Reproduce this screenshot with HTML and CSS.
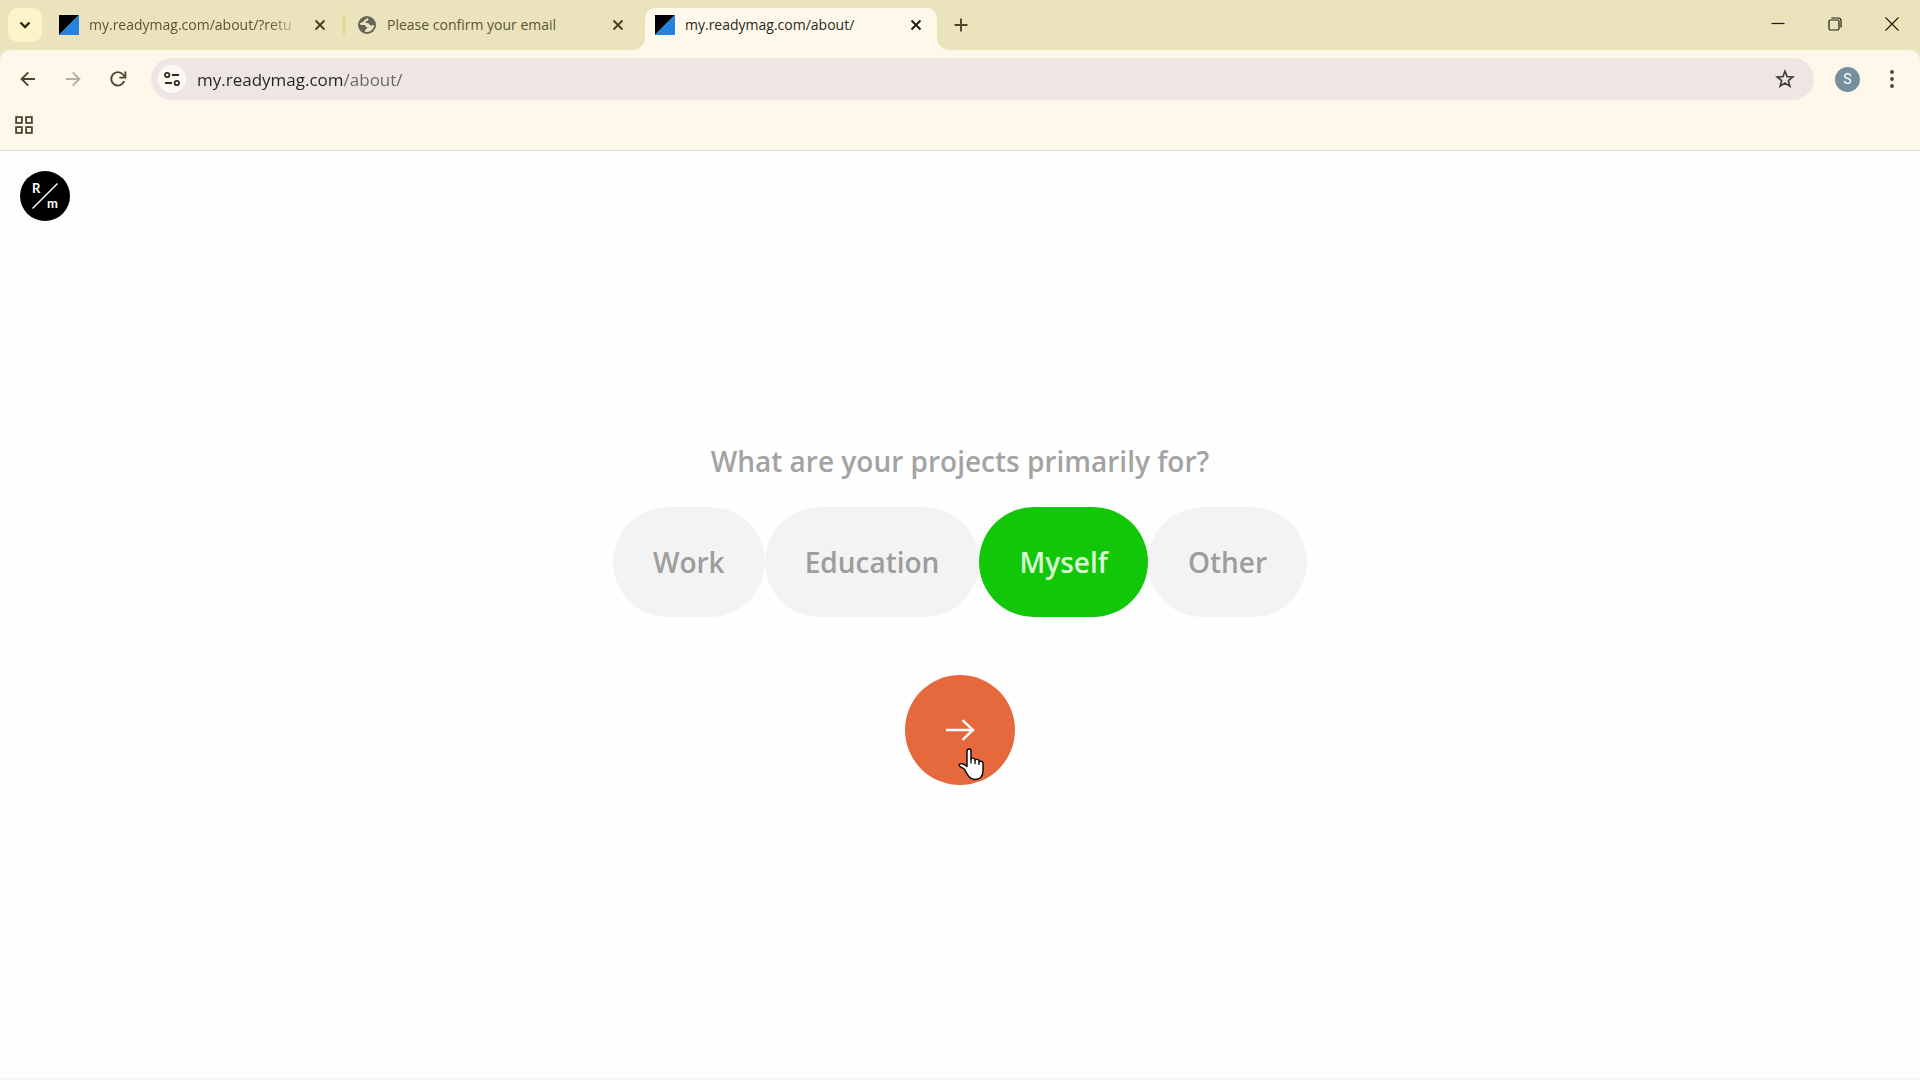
FILE: index.html
```html
<!DOCTYPE html>
<html lang="en">

<head>
    <meta charset="UTF-8">
    <meta name="viewport" content="width=device-width, initial-scale=1.0">
    <title>my.readymag.com/about/</title>
    <link rel="stylesheet" href="styles.css">
</head>

<body>
    <header class="browser">
        <div class="tab-strip">
            <button class="tab-search" aria-label="Search tabs">
                <svg width="14" height="14" viewBox="0 0 14 14"><path d="M2.5 4.5 7 9l4.500-4.500" fill="none" stroke="currentColor" stroke-width="2.400"/></svg>
            </button>
            <div class="tabs">
                <div class="tab divided">
                    <svg class="favicon" width="20" height="20" viewBox="0 0 20 20"><path d="M0 0h20L0 20z" fill="#000"/><path d="M20 0v20H0z" fill="#2383e2"/></svg>
                    <button class="tab-title">my.readymag.com/about/?retu</button>
                    <button class="tab-close" aria-label="Close tab"><svg width="12" height="12" viewBox="0 0 12 12"><path d="M1.500 1.500l9 9M10.500 1.500l-9 9" stroke="currentColor" stroke-width="1.900"/></svg></button>
                </div>
                <div class="tab">
                    <svg class="favicon" width="20" height="20" viewBox="0 0 20 20"><circle cx="10" cy="10" r="9" fill="#66635a"/><path d="M11 2.800c-1 .3-1.200 1.500-2.600 1.700-1.400.3-1.300 1.800-2.500 2.400-1.300.5-2.600.6-3 1.800 0 1.500 2.600 1.200 4.200 1.300 1.500.2 1.200 1.800 2.600 2.100 1.100.3.6 1.700-.5 1.900-1.300.3-1.400 1.600-1 3 4.500.7 8.700-2.600 8.900-6.800-1-.5-1.700.6-3 .4-1.700-.3-1.400-2-2.900-2.400-1.300-.3-2.700.2-2.500-1.200.2-1.100 2.300-.7 2.700-2 .2-.9-.6-1.300-.4-2.200z" fill="#ebe3bb"/></svg>
                    <button class="tab-title">Please confirm your email</button>
                    <button class="tab-close" aria-label="Close tab"><svg width="12" height="12" viewBox="0 0 12 12"><path d="M1.500 1.500l9 9M10.500 1.500l-9 9" stroke="currentColor" stroke-width="1.900"/></svg></button>
                </div>
                <div class="tab active">
                    <svg class="favicon" width="20" height="20" viewBox="0 0 20 20"><path d="M0 0h20L0 20z" fill="#000"/><path d="M20 0v20H0z" fill="#2383e2"/></svg>
                    <button class="tab-title">my.readymag.com/about/</button>
                    <button class="tab-close" aria-label="Close tab"><svg width="12" height="12" viewBox="0 0 12 12"><path d="M1.500 1.500l9 9M10.500 1.500l-9 9" stroke="currentColor" stroke-width="1.900"/></svg></button>
                </div>
            </div>
            <button class="new-tab" aria-label="New tab"><svg width="14" height="14" viewBox="0 0 14 14"><path d="M7 .5v13M.5 7h13" stroke="currentColor" stroke-width="1.900"/></svg></button>
            <div class="window-controls">
                <button aria-label="Minimize"><svg width="14" height="14" viewBox="0 0 14 14"><path d="M.5 6.500h13" stroke="currentColor" stroke-width="1.200"/></svg></button>
                <button aria-label="Restore"><svg width="14" height="14" viewBox="0 0 14 14"><rect x="1" y="3" width="10" height="10" rx="1.500" fill="none" stroke="currentColor" stroke-width="1.200"/><path d="M3.500 1h7A2.500 2.500 0 0 1 13 3.500v7" fill="none" stroke="currentColor" stroke-width="1.200"/></svg></button>
                <button aria-label="Close"><svg width="14" height="14" viewBox="0 0 14 14"><path d="M.5.5l13 13M13.500.5l-13 13" stroke="currentColor" stroke-width="1.200"/></svg></button>
            </div>
        </div>

        <div class="toolbar-wrap">
            <div class="toolbar">
                <div class="nav">
                    <button aria-label="Back"><svg width="16" height="16" viewBox="0 0 16 16"><path d="M15 8H2M8.300 1.300 1.600 8l6.700 6.700" fill="none" stroke="currentColor" stroke-width="1.900"/></svg></button>
                    <button aria-label="Forward" disabled><svg width="16" height="16" viewBox="0 0 16 16"><path d="M1 8h13M7.700 1.300 14.400 8l-6.700 6.700" fill="none" stroke="currentColor" stroke-width="1.900"/></svg></button>
                    <button aria-label="Reload"><svg width="18" height="18" viewBox="0 0 18 18"><path d="M15.200 11.200A6.700 6.700 0 1 1 14 4.500L16 7" fill="none" stroke="currentColor" stroke-width="1.900"/><path d="M16.400 1.600v6h-6" fill="none" stroke="currentColor" stroke-width="1.900"/></svg></button>
                </div>
                <div class="address">
                    <button class="site-info" aria-label="View site information"><svg width="16" height="16" viewBox="0 0 16 16"><g fill="none" stroke="currentColor" stroke-width="1.800"><circle cx="3.200" cy="4" r="2.200"/><path d="M8 4h7M1 12h7"/><circle cx="12.800" cy="12" r="2.200"/></g></svg></button>
                    <input class="url" type="text" aria-label="Address" value="my.readymag.com/about/">
                    <button class="star" aria-label="Bookmark this tab"><svg width="20" height="20" viewBox="0 0 20 20"><path d="M10 2.300l2.100 5.300 5.700.4-4.400 3.600 1.400 5.500L10 14.100l-4.800 3 1.400-5.500L2.200 8l5.700-.4z" fill="none" stroke="currentColor" stroke-width="1.700"/></svg></button>
                </div>
                <button class="avatar" aria-label="Profile">S</button>
                <button class="menu" aria-label="Menu"><svg width="6" height="20" viewBox="0 0 6 20"><g fill="currentColor"><circle cx="3" cy="3" r="1.900"/><circle cx="3" cy="10" r="1.900"/><circle cx="3" cy="17" r="1.900"/></g></svg></button>
            </div>
            <div class="bookmarks">
                <button aria-label="Apps"><svg width="18" height="18" viewBox="0 0 18 18"><g fill="none" stroke="currentColor" stroke-width="1.800"><rect x="1.100" y="1.100" width="5.800" height="5.800"/><rect x="11.100" y="1.100" width="5.800" height="5.800"/><rect x="1.100" y="11.100" width="5.800" height="5.800"/><rect x="11.100" y="11.100" width="5.800" height="5.800"/></g></svg></button>
            </div>
        </div>
    </header>

    <main class="page">
        <a class="logo" href="#" aria-label="Readymag">
            <svg width="50" height="50" viewBox="0 0 50 50">
                <circle cx="25" cy="25" r="25" fill="#000"/>
                <path d="M12.500 37.500l25-25" stroke="#fff" stroke-width="1.400"/>
                <text x="12" y="22">R</text>
                <text x="27" y="37">m</text>
            </svg>
        </a>

        <form class="survey">
            <h1>What are your projects primarily for?</h1>
            <div class="options" role="radiogroup" aria-label="What are your projects primarily for?">
                <label class="option"><input type="radio" name="purpose"><span>Work</span></label>
                <label class="option"><input type="radio" name="purpose"><span>Education</span></label>
                <label class="option"><input type="radio" name="purpose" checked><span>Myself</span></label>
                <label class="option"><input type="radio" name="purpose"><span>Other</span></label>
            </div>
            <button class="next" type="button" aria-label="Next">
                <svg width="30" height="22" viewBox="0 0 30 22"><path d="M1 11h27M17.500 1.200 28 11 17.500 20.800" fill="none" stroke="#fff" stroke-width="2.400"/></svg>
                <svg class="pointer" width="26" height="33" viewBox="0 0 26 33"><path d="M9 18.500V3.200C9 .3 13 .3 13 3.200v8.300c.3-1.900 3.800-1.900 4 .3v.7c.5-1.600 3.700-1.500 4 .5v1c.6-1.300 4-1.100 4 1.500v7.500c0 5-3 8.500-7.500 8.500-4 0-6.200-1.600-8-4.800L6.300 21 1.800 18.300C.2 17 2 15.200 4.200 15.800 6 16.300 7.600 17 9 18.500z" fill="#fff" stroke="#000" stroke-width="1.400" stroke-linejoin="round"/><path d="M13 11.500v4M17 12.500v3.500M21 14v3" stroke="#000" stroke-width="1.300"/></svg>
            </button>
        </form>
    </main>
</body>

</html>
```
FILE: styles.css
```css
* {
    margin: 0;
    padding: 0;
    box-sizing: border-box;
}

body {
    display: flex;
    flex-direction: column;
    min-height: 100vh;
    background: #fefefe;
    font-family: "Open Sans", "Noto Sans", sans-serif;
}

button,
input {
    border: none;
    outline: none;
    background: none;
    font: inherit;
    color: inherit;
}

button {
    display: flex;
    align-items: center;
    justify-content: center;
    cursor: pointer;
}

svg {
    display: block;
    flex: none;
}

/* tabs */
.browser {
    background: #ebe3bb;
    color: #4a4530;
}

.tab-strip {
    display: flex;
    height: 50px;
    padding-top: 8px;
}

.tab-search {
    width: 34px;
    height: 34px;
    margin: 0 7px 0 8px;
    border-radius: 10px;
    background: #fdf3c8;
    color: #2a2610;
}

.tabs {
    display: flex;
    gap: 6px;
}

.tab {
    position: relative;
    display: flex;
    align-items: center;
    gap: 10px;
    width: 292px;
    padding: 0 12px 8px 10px;
    font-size: 14px;
    color: #5c5638;
}

.tab-title {
    flex: 1;
    min-width: 0;
    justify-content: flex-start;
    white-space: nowrap;
    line-height: 24px;
}

.divided .tab-title {
    -webkit-mask-image: linear-gradient(to right, #000 85%, transparent);
    mask-image: linear-gradient(to right, #000 85%, transparent);
}

.divided::after {
    content: "";
    position: absolute;
    right: -4px;
    top: 7px;
    width: 2px;
    height: 20px;
    background: #ecd684;
}

.tab-close {
    width: 18px;
    height: 18px;
    color: #46401f;
}

.active {
    border-radius: 10px 10px 0 0;
    background: #fef8eb;
    color: #2b281c;
}

.active .tab-close {
    color: #1e1b10;
}

.active::before,
.active::after {
    content: "";
    position: absolute;
    bottom: 0;
    width: 12px;
    height: 12px;
}

.active::before {
    left: -12px;
    background: radial-gradient(circle at 0 0, transparent 12px, #fef8eb 12px);
}

.active::after {
    right: -12px;
    background: radial-gradient(circle at 100% 0, transparent 12px, #fef8eb 12px);
}

.new-tab {
    width: 34px;
    height: 34px;
    margin-left: 7px;
}

.window-controls {
    display: flex;
    margin-left: auto;
    color: #1e1c12;
}

.window-controls button {
    width: 57px;
    height: 32px;
}

/* toolbar */
.toolbar-wrap {
    border-radius: 10px 10px 0 0;
    border-bottom: 1px solid #e3dfd0;
    background: #fef8eb;
}

.toolbar {
    display: flex;
    align-items: center;
    padding: 8px 14px 0 12px;
}

.nav {
    display: flex;
    gap: 13px;
    margin-right: 17px;
}

.nav button {
    width: 32px;
    height: 32px;
}

.nav button:disabled {
    color: #b3ae9f;
}

.address {
    display: flex;
    align-items: center;
    flex: 1;
    height: 42px;
    padding: 0 19px 0 7px;
    border-radius: 21px;
    background: #eee6e3;
}

.site-info {
    width: 28px;
    height: 28px;
    border-radius: 50%;
    background: #fef8f2;
    color: #2f2c27;
}

/* host is dark, path is lighter */
.url {
    flex: 1;
    margin-left: 11px;
    height: 32px;
    font-size: 17px;
    color: transparent;
    background: linear-gradient(to right, #25221f 147px, #6a6562 147px);
    -webkit-background-clip: text;
    background-clip: text;
}

.star {
    color: #45413c;
}

.avatar {
    width: 25px;
    height: 25px;
    margin: 0 18px 0 21px;
    border-radius: 50%;
    background: #74909c;
    color: #fff;
    font-family: Roboto, sans-serif;
    font-size: 14px;
}

.menu {
    width: 28px;
    height: 28px;
}

.bookmarks {
    display: flex;
    align-items: center;
    height: 50px;
    padding: 0 15px;
}

/* page */
.page {
    position: relative;
    display: flex;
    flex: 1;
    align-items: center;
    justify-content: center;
    border-bottom: 2px solid #f6f6f6;
}

.logo {
    position: absolute;
    left: 20px;
    top: 20px;
}

.logo text {
    fill: #fff;
    font-family: Lato, sans-serif;
    font-size: 13px;
    font-weight: 700;
}

.survey {
    display: flex;
    flex-direction: column;
    align-items: center;
}

h1 {
    margin-bottom: 30px;
    font-size: 28px;
    font-weight: 600;
    line-height: 32px;
    color: #a3a3a3;
}

.options {
    display: flex;
    margin-bottom: 58px;
}

.option {
    position: relative;
    cursor: pointer;
}

.option input {
    position: absolute;
    opacity: 0;
}

.option span {
    display: block;
    padding: 0 40px;
    border-radius: 55px;
    background: #f3f3f3;
    color: #9d9d9d;
    font-size: 28px;
    font-weight: 600;
    line-height: 110px;
}

.option input:checked + span {
    background: #12c608;
    color: #d9f7d4;
}

.next {
    position: relative;
    width: 110px;
    height: 110px;
    border-radius: 50%;
    background: #e6693e;
}

.pointer {
    position: absolute;
    left: 53px;
    top: 73px;
}
```
